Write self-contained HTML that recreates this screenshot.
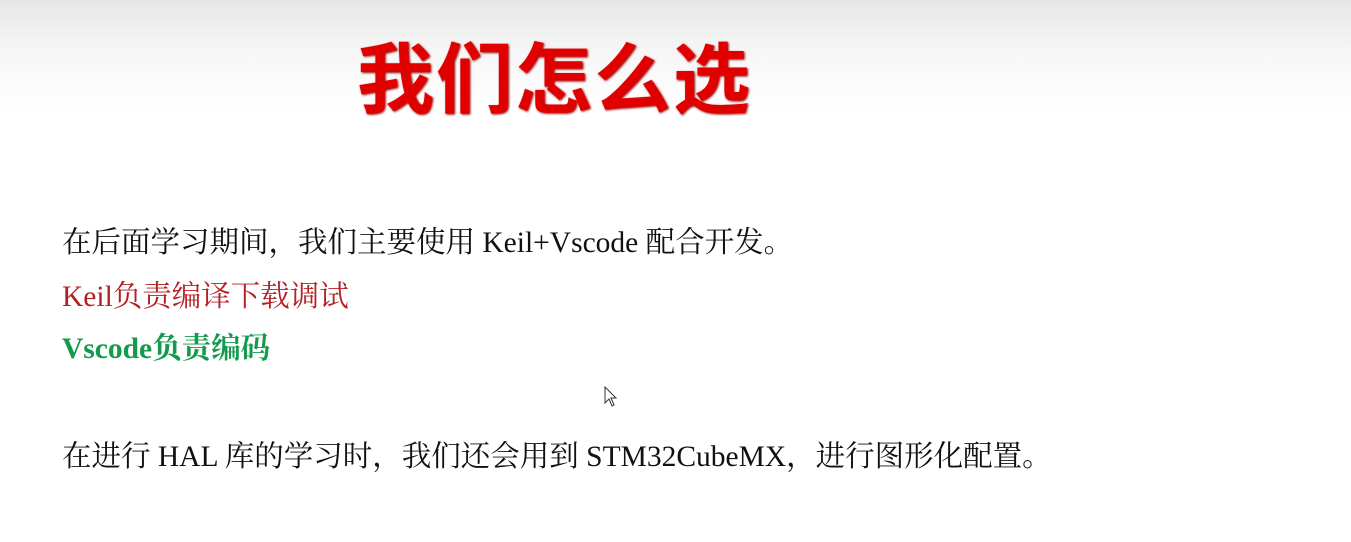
<!DOCTYPE html>
<html><head><meta charset="utf-8"><style>
html,body{margin:0;padding:0}
body{width:1351px;height:542px;overflow:hidden;position:relative;background:linear-gradient(#e6e6e6 0px,#f6f6f6 50px,#fff 110px,#fff 542px);font-family:"Liberation Serif","Noto Serif CJK SC",serif}
.t{position:absolute;left:357px;top:19px;font:bold 77px "Liberation Sans","Noto Sans CJK SC",sans-serif;color:#e00000;letter-spacing:2px;white-space:nowrap;text-shadow:1px 1px 2px #900}
.l{position:absolute;left:62px;font-size:29.5px;line-height:36px;white-space:nowrap;color:#111}
</style></head><body>
<div class="t">我们怎么选</div>
<div class="l" style="top:225px">在后面学习期间，我们主要使用 Keil+Vscode 配合开发。</div>
<div class="l" style="top:279px;color:#b52025">Keil负责编译下载调试</div>
<div class="l" style="top:331px;color:#139a4c;font-weight:bold">Vscode负责编码</div>
<div class="l" style="top:439px">在进行 HAL 库的学习时，我们还会用到 STM32CubeMX，进行图形化配置。</div>
<svg style="position:absolute;left:604px;top:386px" width="16" height="22" viewBox="0 0 16 22"><path d="M1 1 L1 17 L5 13 L8 20 L10 19 L7 12 L12 12 Z" fill="#fff" stroke="#333" stroke-width="1"/></svg>
</body></html>
